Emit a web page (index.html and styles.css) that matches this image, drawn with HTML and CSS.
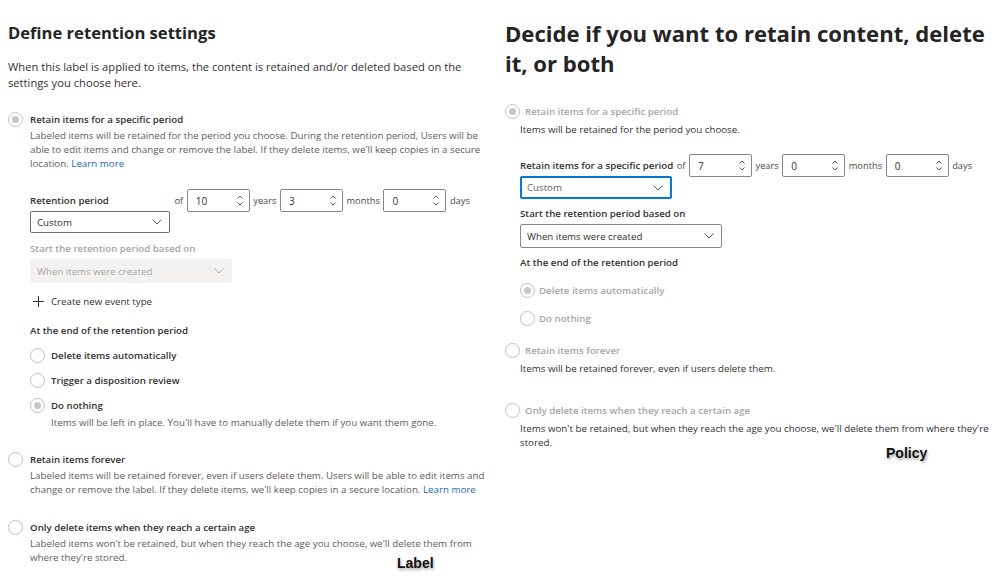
FILE: index.html
```html
<!DOCTYPE html>
<html lang="en">
<head>
<meta charset="utf-8">
<title>Retention settings: Label vs Policy</title>
<link rel="stylesheet" href="styles.css">
</head>
<body>
<main class="page">
  <section class="col col-label">
    <h1 class="title-sm">Define retention settings</h1>
    <p class="intro">When this label is applied to items, the content is retained and/or deleted based on the settings you choose here.</p>

    <div class="option option-first">
      <div class="opt-head"><span class="radio checked"></span><span class="lbl">Retain items for a specific period</span></div>
      <p class="desc">Labeled items will be retained for the period you choose. During the retention period, Users will be able to edit items and change or remove the label. If they delete items, we'll keep copies in a secure location. <a class="link">Learn more</a></p>
      <div class="sub">
        <div class="period">
          <span class="lbl period-label">Retention period</span>
          <span class="unit">of</span>
          <div class="spin"><span>10</span><span class="spin-btns"><svg width="6" height="4" viewBox="0 0 6 4"><polyline points="0.5,3.5 3,1 5.5,3.5"/></svg><svg width="6" height="4" viewBox="0 0 6 4"><polyline points="0.5,0.5 3,3 5.5,0.5"/></svg></span></div>
          <span class="unit">years</span>
          <div class="spin"><span>3</span><span class="spin-btns"><svg width="6" height="4" viewBox="0 0 6 4"><polyline points="0.5,3.5 3,1 5.5,3.5"/></svg><svg width="6" height="4" viewBox="0 0 6 4"><polyline points="0.5,0.5 3,3 5.5,0.5"/></svg></span></div>
          <span class="unit">months</span>
          <div class="spin"><span>0</span><span class="spin-btns"><svg width="6" height="4" viewBox="0 0 6 4"><polyline points="0.5,3.5 3,1 5.5,3.5"/></svg><svg width="6" height="4" viewBox="0 0 6 4"><polyline points="0.5,0.5 3,3 5.5,0.5"/></svg></span></div>
          <span class="unit">days</span>
        </div>
        <div class="dropdown dd-custom"><span>Custom</span><svg class="chev" width="10" height="6" viewBox="0 0 10 6"><polyline points="0.5,0.5 5,5 9.5,0.5"/></svg></div>
        <p class="field-label field-start is-disabled">Start the retention period based on</p>
        <div class="dropdown dd-when dd-disabled"><span>When items were created</span><svg class="chev" width="10" height="6" viewBox="0 0 10 6"><polyline points="0.5,0.5 5,5 9.5,0.5"/></svg></div>
        <div class="action"><svg class="plus" width="11" height="11" viewBox="0 0 11 11"><path d="M5.5 0v11M0 5.5h11"/></svg><span>Create new event type</span></div>
        <p class="field-label field-end">At the end of the retention period</p>
        <div class="choice"><span class="radio"></span><span class="lbl">Delete items automatically</span></div>
        <div class="choice"><span class="radio"></span><span class="lbl">Trigger a disposition review</span></div>
        <div class="choice"><span class="radio checked"></span><span class="lbl">Do nothing</span></div>
        <p class="desc choice-desc">Items will be left in place. You'll have to manually delete them if you want them gone.</p>
      </div>
    </div>

    <div class="option option-forever">
      <div class="opt-head"><span class="radio"></span><span class="lbl">Retain items forever</span></div>
      <p class="desc">Labeled items will be retained forever, even if users delete them. Users will be able to edit items and change or remove the label. If they delete items, we'll keep copies in a secure location. <a class="link">Learn more</a></p>
    </div>

    <div class="option option-age">
      <div class="opt-head"><span class="radio"></span><span class="lbl">Only delete items when they reach a certain age</span></div>
      <p class="desc">Labeled items won't be retained, but when they reach the age you choose, we'll delete them from where they're stored.</p>
    </div>

    <span class="caption caption-label">Label</span>
  </section>

  <section class="col col-policy">
    <h1 class="title-lg">Decide if you want to retain content, delete it, or both</h1>

    <div class="option option-first">
      <div class="opt-head"><span class="radio checked"></span><span class="lbl">Retain items for a specific period</span></div>
      <p class="desc">Items will be retained for the period you choose.</p>
      <div class="sub">
        <div class="period">
          <span class="lbl period-label">Retain items for a specific period</span>
          <span class="unit">of</span>
          <div class="spin"><span>7</span><span class="spin-btns"><svg width="6" height="4" viewBox="0 0 6 4"><polyline points="0.5,3.5 3,1 5.5,3.5"/></svg><svg width="6" height="4" viewBox="0 0 6 4"><polyline points="0.5,0.5 3,3 5.5,0.5"/></svg></span></div>
          <span class="unit">years</span>
          <div class="spin"><span>0</span><span class="spin-btns"><svg width="6" height="4" viewBox="0 0 6 4"><polyline points="0.5,3.5 3,1 5.5,3.5"/></svg><svg width="6" height="4" viewBox="0 0 6 4"><polyline points="0.5,0.5 3,3 5.5,0.5"/></svg></span></div>
          <span class="unit">months</span>
          <div class="spin"><span>0</span><span class="spin-btns"><svg width="6" height="4" viewBox="0 0 6 4"><polyline points="0.5,3.5 3,1 5.5,3.5"/></svg><svg width="6" height="4" viewBox="0 0 6 4"><polyline points="0.5,0.5 3,3 5.5,0.5"/></svg></span></div>
          <span class="unit">days</span>
        </div>
        <div class="dropdown dd-custom dd-focus"><span>Custom</span><svg class="chev" width="10" height="6" viewBox="0 0 10 6"><polyline points="0.5,0.5 5,5 9.5,0.5"/></svg></div>
        <p class="field-label field-start">Start the retention period based on</p>
        <div class="dropdown dd-when"><span>When items were created</span><svg class="chev" width="10" height="6" viewBox="0 0 10 6"><polyline points="0.5,0.5 5,5 9.5,0.5"/></svg></div>
        <p class="field-label field-end">At the end of the retention period</p>
        <div class="choice"><span class="radio checked"></span><span class="lbl">Delete items automatically</span></div>
        <div class="choice"><span class="radio"></span><span class="lbl">Do nothing</span></div>
      </div>
    </div>

    <div class="option option-forever">
      <div class="opt-head"><span class="radio"></span><span class="lbl">Retain items forever</span></div>
      <p class="desc">Items will be retained forever, even if users delete them.</p>
    </div>

    <div class="option option-age">
      <div class="opt-head"><span class="radio"></span><span class="lbl">Only delete items when they reach a certain age</span></div>
      <p class="desc">Items won't be retained, but when they reach the age you choose, we'll delete them from where they're stored.</p>
    </div>

    <span class="caption caption-policy">Policy</span>
  </section>
</main>
</body>
</html>
```

FILE: styles.css
```css
* { box-sizing: border-box; margin: 0; padding: 0; }

html, body { background: #ffffff; }

body {
  width: 1000px;
  height: 578px;
  overflow: hidden;
  font-family: "Open Sans", "Noto Sans", "DejaVu Sans", sans-serif;
  color: #323130;
}

.page {
  display: grid;
  grid-template-columns: 484px 490px;
  column-gap: 13px;
  padding-left: 8px;
}

.col {
  position: relative;
  height: 578px;
}

.col-label { padding-top: 21px; }
.col-policy { padding-top: 18px; }

.title-sm {
  font-size: 16.6px;
  font-weight: 700;
  line-height: 24px;
  color: #252423;
}

.title-lg {
  font-size: 22.1px;
  font-weight: 700;
  line-height: 30px;
  color: #252423;
}

.intro {
  margin-top: 14px;
  font-size: 11.2px;
  line-height: 16px;
  color: #323130;
}

/* radios */
.radio {
  flex: none;
  width: 15px;
  height: 15px;
  border: 1px solid #c2c0be;
  border-radius: 50%;
  background: #ffffff;
  display: flex;
  align-items: center;
  justify-content: center;
}

.radio.checked::after {
  content: "";
  width: 7px;
  height: 7px;
  border-radius: 50%;
  background: #c8c6c4;
}

.opt-head,
.choice {
  display: flex;
  align-items: center;
  height: 15px;
}

.opt-head { gap: 7px; }
.choice { gap: 6px; }

.lbl {
  font-size: 9.7px;
  font-weight: 600;
  line-height: 15px;
  white-space: nowrap;
  color: #323130;
}

.desc {
  font-size: 9.75px;
  line-height: 14px;
  color: #5f5d5b;
}

.link {
  color: #1a68b4;
  text-decoration: none;
}

.field-label {
  font-size: 9.7px;
  font-weight: 600;
  line-height: 14px;
  color: #323130;
}

.field-label.is-disabled { color: #a8a6a4; }

/* period row */
.period {
  display: flex;
  align-items: center;
  gap: 3.5px;
  height: 23px;
}

.unit {
  font-size: 9.3px;
  line-height: 14px;
  color: #4b4947;
}

.spin {
  width: 63px;
  height: 23px;
  border: 1px solid #8a8886;
  border-radius: 2px;
  display: flex;
  align-items: center;
  justify-content: space-between;
  padding: 0 6px 0 8px;
  font-size: 10px;
  color: #323130;
}

.spin-btns {
  display: flex;
  flex-direction: column;
  gap: 3px;
}

.spin-btns svg,
.chev {
  fill: none;
  stroke: #605e5c;
  stroke-width: 1;
}

/* dropdowns */
.dropdown {
  display: flex;
  align-items: center;
  justify-content: space-between;
  padding: 0 7px 0 6px;
  border: 1px solid #8a8886;
  border-radius: 2px;
  font-size: 9.7px;
  color: #323130;
}

.dd-custom {
  margin-top: -1px;
  width: 140px;
  height: 22px;
  border-color: #6e6c6a;
}

.dd-when {
  margin-top: 3px;
  width: 202px;
  height: 24px;
}

.dd-disabled {
  background: #f3f2f1;
  border-color: #f3f2f1;
  color: #a8a6a4;
}

.dd-disabled .chev { stroke: #b3b0ad; }

.dd-focus {
  width: 152px;
  height: 23px;
  border: 2px solid #0078d4;
  padding-left: 5px;
  color: #605e5c;
}

.action {
  margin-top: 11px;
  display: flex;
  align-items: center;
  gap: 7px;
  height: 14px;
  padding-left: 3px;
  font-size: 9.7px;
  color: #323130;
}

.plus {
  fill: none;
  stroke: #323130;
  stroke-width: 1;
}

/* ---------- Label column spacing ---------- */
.col-label .option-first { margin-top: 21px; }
.col-label .opt-head + .desc { margin-top: 2px; }
.col-label .desc { padding-left: 22px; }
.col-label .sub { padding-left: 22px; }
.col-label .period { margin-top: 18px; }
.col-label .period-label { width: 141px; }
.col-label .field-start { margin-top: 9px; }
.col-label .field-end { margin-top: 16px; }
.col-label .choice { margin-top: 10px; }
.col-label .choice-desc { margin-top: 3px; padding-left: 21px; }
.col-label .option-forever { margin-top: 22px; }
.col-label .option-age { margin-top: 23px; }

/* ---------- Policy column spacing ---------- */
.col-policy .option-first { margin-top: 25.5px; }
.col-policy .opt-head { gap: 5px; }
.col-policy .opt-head .lbl,
.col-policy .choice .lbl { color: #a8a6a4; }
.col-policy .opt-head + .desc { margin-top: 4px; }
.col-policy .desc { padding-left: 15px; color: #323130; }
.col-policy .sub { padding-left: 15px; }
.col-policy .period { margin-top: 17.5px; }
.col-policy .field-start { margin-top: 8px; }
.col-policy .field-end { margin-top: 8px; }
.col-policy .choice { margin-top: 13px; gap: 4px; }
.col-policy .option-forever { margin-top: 16.5px; }
.col-policy .option-age { margin-top: 27.5px; }

/* annotation captions laid over the screenshots */
.caption {
  position: absolute;
  font-family: "Liberation Sans", Arial, sans-serif;
  font-size: 14px;
  font-weight: 700;
  line-height: 16px;
  color: #111111;
  text-shadow: 1px 2px 3px rgba(0, 0, 0, 0.35);
}

.caption-label { left: 389px; top: 555px; }
.caption-policy { left: 381px; top: 445px; }
```
